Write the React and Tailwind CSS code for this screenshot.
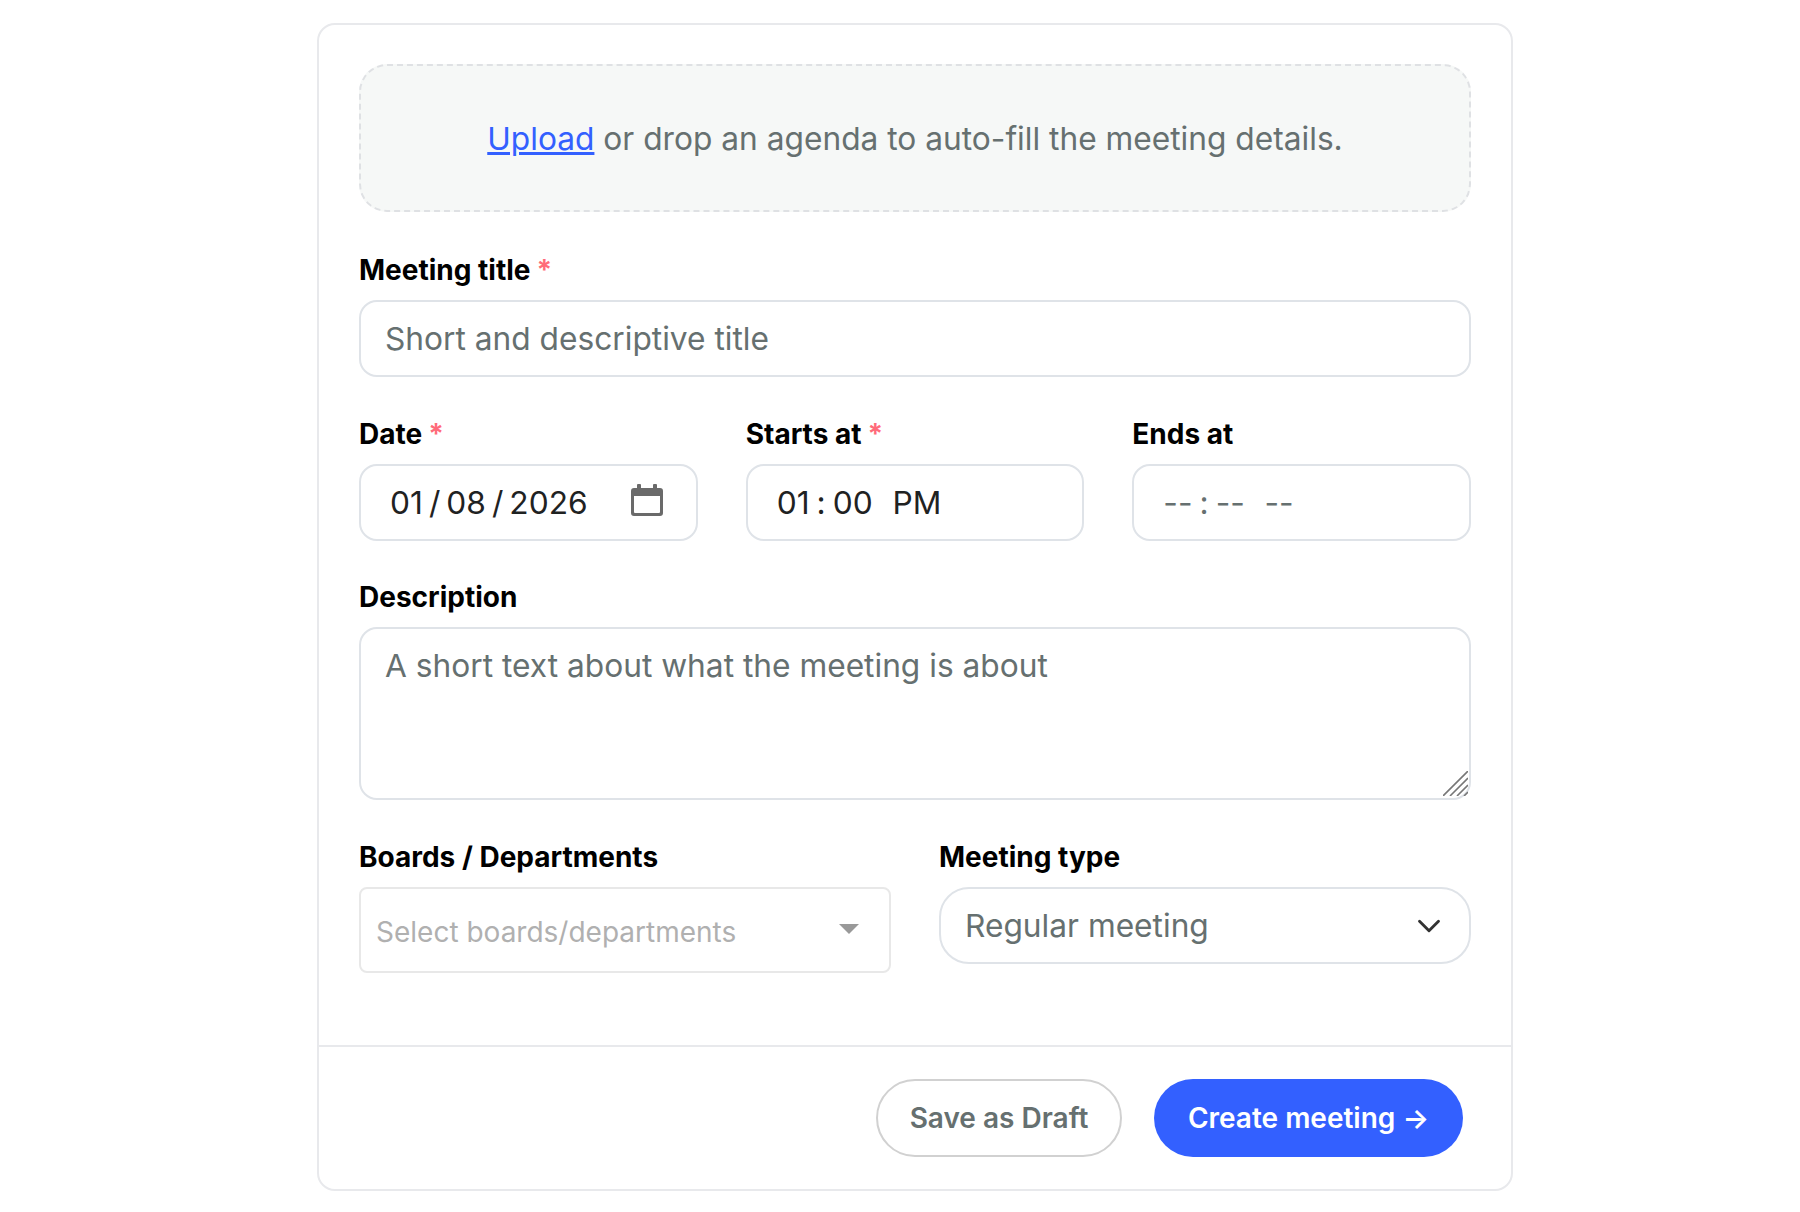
import { ChevronDown } from 'lucide-react';

const inputCls =
  'w-full h-[77px] rounded-[18px] border-2 border-[#dfe3e8] bg-white px-[24px] text-[31.7px] text-[#1f2222] outline-none placeholder:text-[#667070]';

const dateTimeCls =
  '[&::-webkit-calendar-picker-indicator]:hidden [&::-webkit-datetime-edit]:pl-[4px]';

const timeCls = `${dateTimeCls} [&::-webkit-datetime-edit-text]:px-[6px] [&::-webkit-datetime-edit-ampm-field]:ml-0`;

const Label = ({ children, required }) => (
  <label className="mb-[13px] block text-[28px] leading-[34px] font-bold text-black">
    {children}
    {required && <span className="ml-[6px] text-[#ff6b7a]">*</span>}
  </label>
);

const CalendarIcon = () => (
  <svg
    viewBox="0 0 32 32"
    className="pointer-events-none absolute top-[20px] right-[35px] h-[32px] w-[32px]"
    fill="#6a6a6a"
  >
    <rect x="6" y="0" width="4" height="6" rx="1" />
    <rect x="22" y="0" width="4" height="6" rx="1" />
    <path
      fillRule="evenodd"
      d="M3 4h26a3 3 0 0 1 3 3v22a3 3 0 0 1-3 3H3a3 3 0 0 1-3-3V7a3 3 0 0 1 3-3zM3 12v16a1 1 0 0 0 1 1h24a1 1 0 0 0 1-1V12z"
    />
  </svg>
);

const ResizeGrip = () => (
  <svg
    viewBox="0 0 25 25"
    className="pointer-events-none absolute right-[3px] bottom-[4px] h-[25px] w-[25px]"
    stroke="#777777"
    strokeWidth="1.6"
  >
    <path d="M0 25L25 0M7 25L25 7M14 25L25 14M21 25L25 21" />
  </svg>
);

const App = () => {
  return (
    <div className="min-h-screen bg-white pt-[23px] pl-[317px] font-['Inter','Noto_Sans',sans-serif]">
      <div className="w-[1196px] rounded-[18px] border-2 border-[#e8e9ec]">
        <div className="flex flex-col gap-[39px] px-[40px] pt-[39px] pb-[72px]">
          {/* agenda upload */}
          <div className="mb-[2px] flex h-[148px] items-center justify-center rounded-[28px] border-2 border-dashed border-[#dfe1e4] bg-[#f6f8f7] text-[31.7px] text-[#667070]">
            <p className="pt-[2px]">
              <a href="#" className="text-[#3360ff] underline">Upload</a> or drop an agenda to auto-fill the meeting details.
            </p>
          </div>

          <div className="mb-[1px]">
            <Label required>Meeting title</Label>
            <input className={inputCls} placeholder="Short and descriptive title" />
          </div>

          <div className="grid grid-cols-3 gap-[48px]">
            <div>
              <Label required>Date</Label>
              <div className="relative">
                <input
                  type="date"
                  defaultValue="2026-01-08"
                  className={`${inputCls} ${dateTimeCls} [&::-webkit-datetime-edit-text]:px-[5px]`}
                />
                <CalendarIcon />
              </div>
            </div>
            <div>
              <Label required>Starts at</Label>
              <input type="time" defaultValue="13:00" className={`${inputCls} ${timeCls}`} />
            </div>
            <div>
              <Label>Ends at</Label>
              <input type="time" className={`${inputCls} ${timeCls} text-[#667070]`} />
            </div>
          </div>

          <div className="mb-[1px]">
            <Label>Description</Label>
            <div className="relative">
              <textarea
                className="block h-[173px] w-full resize-none rounded-[18px] border-2 border-[#dfe3e8] bg-white px-[24px] pt-[17px] pb-[14px] text-[31.7px] leading-[40px] outline-none placeholder:text-[#667070]"
                placeholder="A short text about what the meeting is about"
              />
              <ResizeGrip />
            </div>
          </div>

          <div className="grid grid-cols-2 gap-[48px]">
            <div>
              <Label>Boards / Departments</Label>
              <div className="flex h-[86px] items-center justify-between rounded-[8px] border-2 border-[#e8e8e8] bg-white pr-[30px] pl-[15px]">
                <span className="pt-[4px] text-[28px] text-[#b0b0b0]">Select boards/departments</span>
                <span className="mb-[3px] h-0 w-0 border-x-[10px] border-t-[10px] border-x-transparent border-t-[#999999]" />
              </div>
            </div>
            <div>
              <Label>Meeting type</Label>
              <div className="relative">
                <select className={`${inputCls} appearance-none rounded-[30px] text-[#667070]`} defaultValue="regular">
                  <option value="regular">Regular meeting</option>
                </select>
                <ChevronDown
                  size={38}
                  strokeWidth={1.8}
                  className="pointer-events-none absolute top-[20px] right-[23px] text-[#333333]"
                />
              </div>
            </div>
          </div>
        </div>

        <div className="flex justify-end gap-[32px] border-t-2 border-[#e8e9ec] pt-[32px] pr-[48px] pb-[32px]">
          <button className="h-[78px] w-[246px] rounded-full border-2 border-[#d1d1d1] bg-white text-[28px] font-semibold text-[#667070]">
            Save as Draft
          </button>
          <button className="h-[78px] w-[309px] rounded-full bg-[#3360ff] text-[28px] font-semibold text-white">
            Create meeting →
          </button>
        </div>
      </div>
    </div>
  );
};

export default App;
